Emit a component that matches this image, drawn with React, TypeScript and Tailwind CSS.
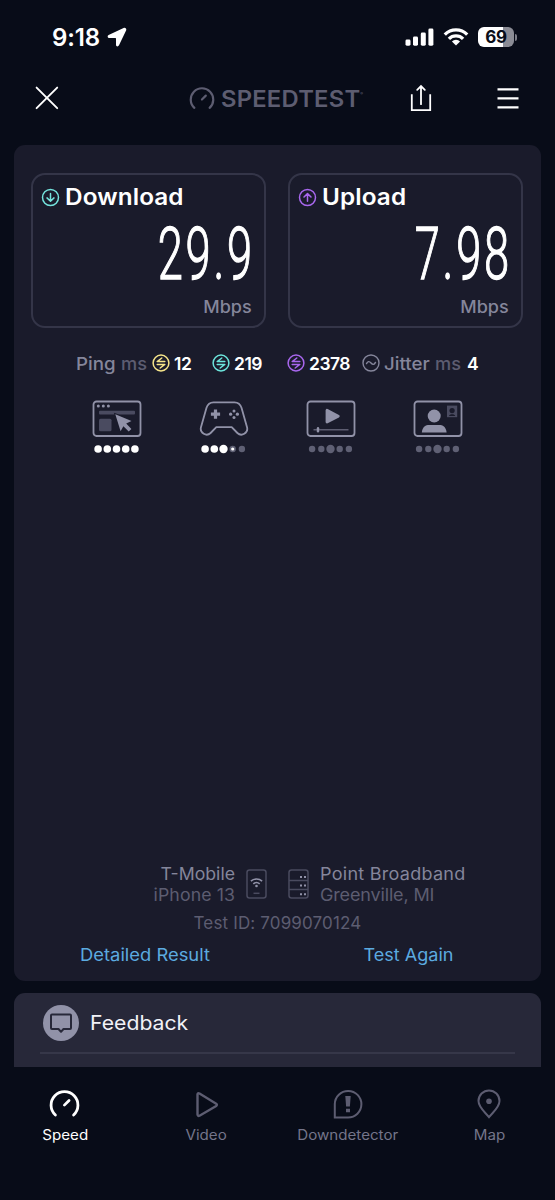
import type { ReactNode } from 'react';

const MUTED = '#9192a8';
const DIM = '#5d5d71';

function Gauge({ size, stroke, color }: { size: number; stroke: number; color: string }) {
  return (
    <svg width={size} height={size} viewBox="0 0 30 30" fill="none" stroke={color} strokeWidth={stroke} strokeLinecap="round">
      <path d="M6.2 25.2a13 13 0 1 1 17.6 0" />
      <path d="M14.9 15.6 19.4 11.1" />
    </svg>
  );
}

function StatusBar() {
  return (
    <div className="flex h-[74px] items-center pl-[52px] pr-[38px]">
      <span className="w-[50px] whitespace-nowrap pt-px text-[24px] font-semibold leading-none tracking-[-0.1px] text-white">9:18</span>
      <svg className="ml-[5px]" width="20" height="20" viewBox="0 0 20 20" fill="#fff">
        <path d="M16.6.9 1.600 8c-1.500.8-1.200 3 .6 3h6c.6 0 .8.2.8.8v6c0 1.900 2.200 2.200 3 .5L19.200 3.200c.6-1.600-1-2.900-2.600-2.300z" />
      </svg>
      <div className="ml-auto flex items-center">
        <svg width="29" height="18" viewBox="0 0 29 18" fill="#fff">
          <rect x="0.5" y="11.5" width="5" height="6.2" rx="1.4" />
          <rect x="8" y="8.5" width="5" height="9.2" rx="1.4" />
          <rect x="15.8" y="4.5" width="5" height="13.2" rx="1.4" />
          <rect x="23.4" y="0.5" width="5" height="17.2" rx="1.4" />
        </svg>
        <svg className="ml-[9px]" width="26" height="18" viewBox="0 0 26 18">
          <g fill="none" stroke="#fff" strokeWidth="3.3">
            <path d="M1.8 6.6a15.800 15.800 0 0 1 22.400 0" />
            <path d="M5.900 10.900a10 10 0 0 1 14.200 0" />
          </g>
          <path d="M13 17.600 8.900 13.500a5.800 5.800 0 0 1 8.200 0z" fill="#fff" />
        </svg>
        <div className="ml-[9px] flex h-[20px] w-[36px] items-center justify-center rounded-[6px] bg-[linear-gradient(90deg,#fff_70%,#8b8c95_70%)] text-[17px] font-bold leading-none tracking-[-0.2px] text-[#0a0d18]">
          69
        </div>
        <div className="ml-[1px] h-[7px] w-[2px] rounded-r-full bg-[#7d7e88]" />
      </div>
    </div>
  );
}

function Header() {
  return (
    <header className="flex h-[48px] items-center pl-[35px] pr-[36px]">
      <svg width="24" height="24" viewBox="0 0 24 24" stroke="#fff" strokeWidth="1.9" strokeLinecap="round">
        <path d="M1.6 1.6l20.600 20.600M22.200 1.600 1.600 22.200" />
      </svg>
      <div className="ml-[130px] flex items-center pt-[2px]">
        <Gauge size={26} stroke={2.5} color={DIM} />
        <span className="ml-[6px] w-[144px] origin-left scale-x-[1.035] whitespace-nowrap text-[23px] font-semibold leading-none tracking-[0.2px] text-[#5d5d71]">
          SPEEDTEST<sup className="relative -top-[12px] text-[4px] leading-none">®</sup>
        </span>
      </div>
      <svg className="ml-[45px]" width="22" height="28" viewBox="0 0 22 28" fill="none" stroke="#fff" strokeWidth="1.8" strokeLinecap="round">
        <path d="M1.800 10.200v16h18.400v-16" strokeLinecap="butt" />
        <path d="M11 20.200V2M7.200 5.800 11 2l3.800 3.800" />
      </svg>
      <svg className="ml-auto" width="22" height="24" viewBox="0 0 22 24" stroke="#fff" strokeWidth="2.2">
        <path d="M.5 3.300h21M.5 12.300h21M.5 21.300h21" />
      </svg>
    </header>
  );
}

function SpeedCard({ label, value, color, up }: { label: string; value: string; color: string; up?: boolean }) {
  return (
    <div className="flex h-[155px] w-[235px] flex-col rounded-[14px] border-2 border-[#343548] pl-[8px] pr-[12px]">
      <div className="mt-[8px] flex h-[28px] items-center">
        <svg width="19" height="19" viewBox="0 0 19 19" fill="none" stroke={color} strokeWidth="1.5" strokeLinecap="round" strokeLinejoin="round">
          <circle cx="9.5" cy="9.5" r="8" />
          <path d={up ? 'M9.5 13.2V6M6 9l3.5-3.4L13 9' : 'M9.5 5.4v7.4M6 9.9l3.5 3.4L13 9.9'} />
        </svg>
        <span className="ml-[5px] origin-left scale-x-[1.08] whitespace-nowrap text-[22.5px] font-semibold leading-none tracking-[0.1px] text-white">{label}</span>
      </div>
      <div className="flex h-[85px] items-center justify-end pt-[2px]">
        <span className="-mr-[3px] origin-right scale-x-[0.62] whitespace-nowrap font-[Roboto] text-[73px] font-light leading-none tracking-[4.5px] text-white [-webkit-text-stroke:1.3px_#fff]">
          {value}
        </span>
      </div>
      <div className="flex h-[20px] items-center justify-end">
        <span className="mt-[3px] origin-right scale-x-[1.06] text-[17px] font-medium leading-none text-[#85869b]">Mbps</span>
      </div>
    </div>
  );
}

function PingIcon({ color }: { color: string }) {
  return (
    <svg width="18" height="18" viewBox="0 0 18 18" fill="none" stroke={color} strokeWidth="1.5" strokeLinejoin="round" strokeLinecap="round">
      <circle cx="9" cy="9" r="7.9" />
      <path d="M12.8 7.6H5.200l4.600-3.600M5.200 10.400h7.600l-4.600 3.600" />
    </svg>
  );
}

function PingRow() {
  return (
    <div className="flex h-[24px] items-center whitespace-nowrap pl-[62px] text-[17.5px] font-semibold leading-none text-white">
      <span className="w-[45px] origin-left scale-x-[1.07] pt-px font-medium text-[#85869b]">Ping</span>
      <span className="w-[31px] origin-left scale-x-[1.04] pt-px font-medium text-[#5d5d71]">ms</span>
      <PingIcon color="#f6e58a" />
      <span className="ml-[4px] w-[38px] pt-px tracking-[-0.3px]">12</span>
      <PingIcon color="#6ce5dc" />
      <span className="ml-[4px] w-[53px] pt-px tracking-[-0.5px]">219</span>
      <PingIcon color="#a867ee" />
      <span className="ml-[4px] w-[53px] pt-px tracking-[-0.5px]">2378</span>
      <svg width="18" height="18" viewBox="0 0 18 18" fill="none" stroke="#85869b" strokeWidth="1.4" strokeLinecap="round">
        <circle cx="9" cy="9" r="8" />
        <path d="M4.5 9.600c1.200-2.400 2.800-2.600 4.500-.6s3.300 1.800 4.500-.6" />
      </svg>
      <span className="ml-[4px] w-[51px] origin-left scale-x-[1.07] pt-px font-medium text-[#85869b]">Jitter</span>
      <span className="w-[32px] origin-left scale-x-[1.04] pt-px font-medium text-[#5d5d71]">ms</span>
      <span className="pt-px">4</span>
    </div>
  );
}

function Dots({ levels }: { levels: string }) {
  // f = full, F = full and larger, h = partly filled, e = empty, E = empty and larger
  return (
    <svg width="49" height="10" viewBox="0 0 49 10">
      {levels.split('').map((l, i) => {
        const cx = 24.5 + (i - 2) * 9.2;
        const full = l === 'f' || l === 'F';
        return (
          <g key={i}>
            <circle cx={cx} cy="5" r={l === 'f' ? 3.8 : l === 'F' || l === 'E' ? 4.2 : 3.2} fill={full ? '#fff' : '#5f6074'} />
            {l === 'h' && <circle cx={cx} cy="5" r="1.6" fill="#fff" />}
          </g>
        );
      })}
    </svg>
  );
}

function Activity({ levels, children }: { levels: string; children: ReactNode }) {
  return (
    <div className="flex flex-col items-center">
      <svg width="50" height="38" viewBox="0 0 50 38" fill="none" stroke={MUTED} strokeWidth="1.8">
        {children}
      </svg>
      <div className="mt-[6px]">
        <Dots levels={levels} />
      </div>
    </div>
  );
}

function Activities() {
  return (
    <div className="ml-[49px] grid w-[428px] grid-cols-4">
      {/* Web browsing */}
      <Activity levels="fffff">
        <rect x="1.5" y="1.5" width="47" height="34.5" rx="3" />
        <g stroke="none" fill={MUTED}>
          <circle cx="6.3" cy="6" r="1.5" />
          <circle cx="11.3" cy="6" r="1.5" />
          <circle cx="16.4" cy="6" r="1.5" />
          <rect x="7" y="10.8" width="36" height="3.8" rx="1" fill="#4a4b60" />
          <rect x="7" y="18.8" width="12.5" height="12.5" rx="1.5" fill="#4a4b60" />
          <path d="M23.300 14.200 39.500 20.900l-5.300 2.600 5.200 5.400-2.700 2.700-5.300-5.300-2.800 5z" stroke="#1a1b2b" strokeWidth="1.800" paintOrder="stroke" />
        </g>
      </Activity>
      {/* Gaming */}
      <Activity levels="ffFhe">
        <path d="M14.500 2.300h21c3.800 0 6 2.300 7 5.500l5.600 19.700c1.200 5.500-5.500 9.500-9.700 5.500l-5.700-5.900H17.300L11.600 33c-4.200 4-10.900 0-9.700-5.500L7.500 7.800c1-3.200 3.200-5.500 7-5.500z" strokeLinejoin="round" />
        <path d="M16.500 9.600v9.200M11.900 14.200h9.200" strokeWidth="3.2" />
        <g stroke="none" fill={MUTED}>
          <circle cx="35" cy="11" r="1.5" />
          <circle cx="35" cy="17.400" r="1.5" />
          <circle cx="31.600" cy="14.200" r="1.6" />
          <circle cx="38.400" cy="14.200" r="1.6" />
        </g>
      </Activity>
      {/* Streaming */}
      <Activity levels="eeEee">
        <rect x="1.5" y="1.5" width="47" height="34.5" rx="3" />
        <path d="M21 10.300v11.800l11.300-5.900z" fill={MUTED} strokeWidth="2.8" strokeLinejoin="round" />
        <path d="M7.500 29.700h35" stroke="#5d5d71" strokeWidth="1.6" />
        <path d="M12 28.200v3" strokeWidth="2.4" strokeLinecap="round" />
      </Activity>
      {/* Video calls */}
      <Activity levels="eeEee">
        <rect x="1.5" y="1.5" width="47" height="34.5" rx="3" />
        <g stroke="none">
          <circle cx="21.2" cy="16" r="6.5" fill={MUTED} />
          <path d="M8.800 32.500c.5-5.800 4.200-7.500 7.200-7.500h10.400c3 0 6.700 1.700 7.200 7.500z" fill={MUTED} />
          <rect x="34" y="5.6" width="10.2" height="11.6" fill="#4a4b60" />
          <circle cx="39.1" cy="10.6" r="2.6" fill="#1a1b2b" />
          <path d="M36 16c.3-2.500 5.900-2.500 6.200 0z" fill="#1a1b2b" />
        </g>
      </Activity>
    </div>
  );
}

function Connection() {
  return (
    <div className="flex h-[42px] items-center whitespace-nowrap text-[17px] leading-[21px]">
      <div className="w-[221px] origin-right scale-x-[1.04] pt-[2px] text-right">
        <p className="text-[#85869b]">T-Mobile</p>
        <p className="tracking-[0.1px] text-[#5d5d71]">iPhone 13</p>
      </div>
      <svg className="ml-[11px]" width="21" height="30" viewBox="0 0 21 30" fill="none" stroke="#4a4b5f" strokeWidth="1.5">
        <rect x="1" y="1" width="19" height="28" rx="2.5" />
        <path d="M7.5 24.300h6" />
        <g stroke={MUTED} strokeWidth="1.6">
          <path d="M4.900 12.200a8.200 8.200 0 0 1 11.200 0" />
          <path d="M7.300 14.900a4.800 4.800 0 0 1 6.400 0" />
        </g>
        <circle cx="10.5" cy="17" r="1.3" fill={MUTED} stroke="none" />
      </svg>
      <svg className="ml-[21px]" width="21" height="30" viewBox="0 0 21 30" fill="none" stroke="#4a4b5f" strokeWidth="1.5">
        <rect x="1" y="1" width="19" height="28" rx="2.5" />
        <path d="M1 11.500h19M1 20.500h19" />
        <path d="M12 8h2M16 8h2M12 16.500h2M16 16.500h2M12 25.300h2M16 25.300h2" stroke={MUTED} strokeWidth="2" />
      </svg>
      <div className="ml-[11px] origin-left scale-x-[1.06] pt-[2px]">
        <p className="tracking-[0.25px] text-[#85869b]">Point Broadband</p>
        <p className="tracking-[-0.15px] text-[#5d5d71]">Greenville, MI</p>
      </div>
    </div>
  );
}

function NavItem({ label, active, children }: { label: string; active?: boolean; children: ReactNode }) {
  return (
    <div className={`flex flex-col items-center ${active ? 'text-white' : 'text-[#74758a]'}`}>
      <div className="flex h-[30px] items-center">{children}</div>
      <span className="mt-[7px] scale-x-[1.08] whitespace-nowrap text-[14px] leading-[18px]">{label}</span>
    </div>
  );
}

export default function App() {
  return (
    <div className="h-[1200px] w-[555px] overflow-hidden bg-[#080c18] font-[Inter,sans-serif]">
      <StatusBar />
      <Header />

      {/* Result panel */}
      <main className="ml-[14px] mt-[23px] flex h-[836px] w-[527px] flex-col rounded-[11px] bg-[#1a1b2b] pt-[28px]">
        <div className="flex gap-[22px] pl-[17px]">
          <SpeedCard label="Download" value="29.9" color="#74e3dd" />
          <SpeedCard label="Upload" value="7.98" color="#a867ee" up />
        </div>
        <div className="mt-[23px]">
          <PingRow />
        </div>
        <div className="mt-[25px]">
          <Activities />
        </div>
        <div className="mt-auto">
          <Connection />
          <p className="mt-[8px] text-center text-[17px] leading-[21px] tracking-[0.15px] text-[#5d5d71]">Test ID: 7099070124</p>
          <div className="mb-[15px] mt-[10px] flex justify-center text-center text-[17px] leading-[22px] text-[#5cabe0]">
            <a className="w-[262px] scale-x-[1.08]">Detailed Result</a>
            <a className="w-[265px] scale-x-[1.06]">Test Again</a>
          </div>
        </div>
      </main>

      {/* Feedback */}
      <section className="ml-[14px] mt-[12px] h-[74px] w-[527px] rounded-t-[11px] bg-[#272839]">
        <div className="flex h-[59px] items-center pl-[29px]">
          <div className="flex h-[36px] w-[36px] items-center justify-center rounded-full bg-[#9192a8]">
            <svg width="24" height="22" viewBox="0 0 24 22" fill="none" stroke="#272839" strokeWidth="2" strokeLinejoin="round">
              <path d="M3 2.500h18q1 0 1 1v12.500q0 1-1 1h-6.500L12 19.800 9.500 17H3q-1 0-1-1V3.500q0-1 1-1z" />
            </svg>
          </div>
          <span className="ml-[11px] origin-left scale-x-[1.06] text-[20px] leading-none text-[#f2f2f7]">Feedback</span>
        </div>
        <div className="ml-[26px] h-[2px] w-[475px] bg-[#363749]" />
      </section>

      {/* Tab bar */}
      <nav className="-ml-[6px] grid w-[566px] grid-cols-4 pt-[22px]">
        <NavItem label="Speed" active>
          <Gauge size={31} stroke={2.7} color="#fff" />
        </NavItem>
        <NavItem label="Video">
          <svg width="30" height="30" viewBox="0 0 30 30" fill="none" stroke="#5d5d71" strokeWidth="2.4" strokeLinejoin="round">
            <path d="M6.500 5.500v20q.2 2 2 1.200L25.200 17q1.400-1.200 0-2.300L8.500 4.500q-1.800-.8-2 1z" />
          </svg>
        </NavItem>
        <NavItem label="Downdetector">
          <svg width="30" height="30" viewBox="0 0 30 30" fill="none" stroke="#5d5d71" strokeWidth="2">
            <path d="M1.800 28.500V15A13.300 13.300 0 1 1 15 28.500z" />
            <path d="M12.300 7h5.400l-.8 10.500h-3.800zM13 19.700h4v3.500h-4z" fill="#5d5d71" stroke="none" />
          </svg>
        </NavItem>
        <NavItem label="Map">
          <svg width="30" height="30" viewBox="0 0 30 30" fill="none" stroke="#5d5d71" strokeWidth="2">
            <path d="M15 28.200C11.500 23.500 4.500 18.500 4.500 12a10.500 10.500 0 0 1 21 0c0 6.500-7 11.500-10.500 16.200z" />
            <circle cx="15" cy="12.3" r="2.8" fill="#5d5d71" stroke="none" />
          </svg>
        </NavItem>
      </nav>
    </div>
  );
}
